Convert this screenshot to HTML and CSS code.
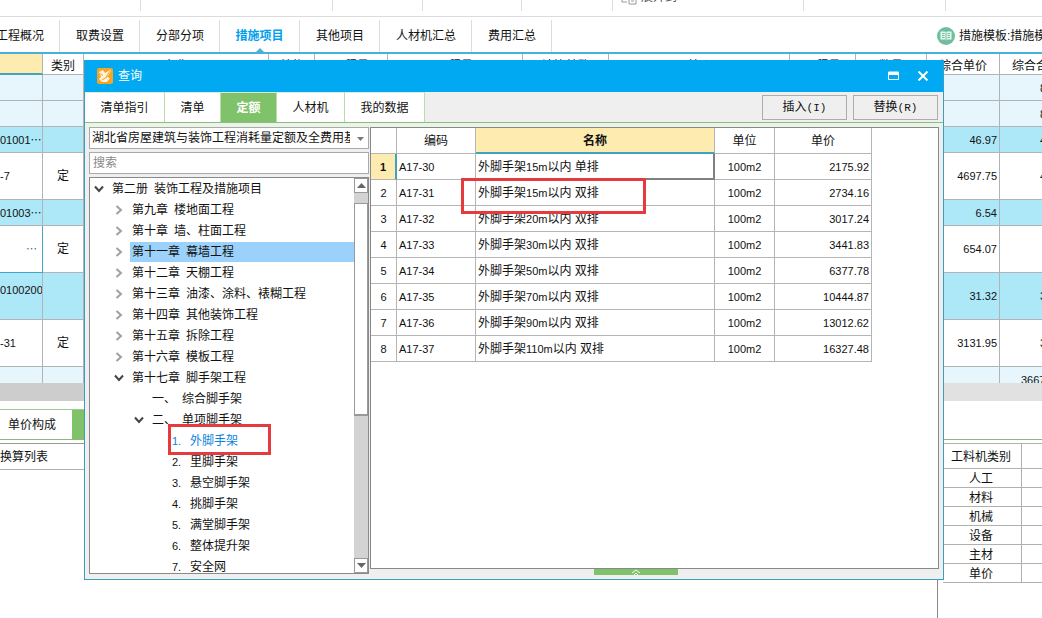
FILE: index.html
```
<!DOCTYPE html>
<html lang="zh-CN">
<head>
<meta charset="utf-8">
<title>查询</title>
<link rel="stylesheet" href="styles.css">
</head>
<body>
<svg class="sprite" aria-hidden="true">
  <symbol id="right" viewBox="0 0 10 10"><path d="M2.5 1 L7 5 L2.5 9" fill="none" stroke="#a0a0a0" stroke-width="2"/></symbol>
  <symbol id="down" viewBox="0 0 10 10"><path d="M1 2.5 L5 7 L9 2.5" fill="none" stroke="#444" stroke-width="2"/></symbol>
</svg>
<div class="app">
  <div class="ribbon">
    <div class="group g1"></div><div class="group g2"></div><div class="group g3"></div><div class="group g4"></div><div class="group g5"></div>
    <div class="group g6">
      <svg width="16" height="16" viewBox="0 0 16 16"><path d="M1 8v5h5M8 5h7v10H8zM10 9h3M10 12h3" fill="none" stroke="#999"/></svg>
      <span>展开到</span>
    </div>
    <div class="group g7"></div>
  </div>
  <div class="tabbar">
    <nav class="tabs">
      <button class="tab first">工程概况</button>
      <button class="tab">取费设置</button>
      <button class="tab">分部分项</button>
      <button class="tab active">措施项目</button>
      <button class="tab">其他项目</button>
      <button class="tab">人材机汇总</button>
      <button class="tab">费用汇总</button>
    </nav>
    <div class="template">
      <svg width="20" height="20" viewBox="0 0 20 20"><circle cx="10" cy="10" r="9" fill="#6fbf9f"/><path d="M4.500 5.500h4.500l1 1 1-1h4.500v8h-4.500l-1 1-1-1h-4.500z" fill="#e9f7f1"/><path d="M10 6.500v7.500M6 7.500h2.500M6 9.500h2.500M6 11.500h2.500M11.500 7.500h2.500M11.500 9.500h2.500M11.500 11.500h2.500" stroke="#6fbf9f"/></svg>
      <span>措施模板:措施模板</span>
    </div>
  </div>
  <div class="sheet">
    <table class="grid">
      <colgroup><col class="c43"><col class="c41"><col class="c185"><col class="c46"><col class="c73"><col class="c135"><col class="c86"><col class="c181"><col class="c66"><col class="c71"><col class="c73"><col class="c73"></colgroup>
      <tr class="head"><th class="current"></th><th>类别</th><th>名称</th><th>单位</th><th>工程量</th><th>工程量</th><th>计算基数</th><th>单价</th><th>工程量</th><th>数量</th><th>综合单价</th><th>综合合价</th></tr>
      <tr class="pale"><td></td><td></td><td colspan="8"></td><td></td><td class="cut">8</td></tr>
      <tr class="pale"><td></td><td></td><td colspan="8"></td><td></td><td class="cut">8</td></tr>
      <tr class="blue"><td class="code">01001⋯</td><td></td><td colspan="8"></td><td class="num">46.97</td><td class="cut">4</td></tr>
      <tr class="tall"><td>-7</td><td class="mid">定</td><td colspan="8"></td><td class="num">4697.75</td><td class="cut">4</td></tr>
      <tr class="blue"><td class="code">01003⋯</td><td></td><td colspan="8"></td><td class="num">6.54</td><td></td></tr>
      <tr class="tall"><td class="code picked">⋯</td><td class="mid">定</td><td colspan="8"></td><td class="num">654.07</td><td></td></tr>
      <tr class="blue tall"><td class="code upper">0100200</td><td></td><td colspan="8"></td><td class="num">31.32</td><td class="cut">3</td></tr>
      <tr class="tall"><td>-31</td><td class="mid">定</td><td colspan="8"></td><td class="num">3131.95</td><td class="cut">3</td></tr>
      <tr class="pale"><td></td><td></td><td colspan="8"></td><td></td><td class="total">3667</td></tr>
    </table>
  </div>
  <div class="hscroll"></div>
  <div class="bottom">
    <section class="detail">
      <div class="subtabs"><button class="subtab">单价构成</button><button class="subtab on" aria-label="换算"></button></div>
      <div class="listhead">换算列表</div>
    </section>
    <section class="kinds">
      <div class="subline"></div>
      <table class="kindtable">
        <colgroup><col class="c78"><col></colgroup>
        <tr><th>工料机类别</th><th></th></tr>
        <tr><td>人工</td><td></td></tr>
        <tr><td>材料</td><td></td></tr>
        <tr><td>机械</td><td></td></tr>
        <tr><td>设备</td><td></td></tr>
        <tr><td>主材</td><td></td></tr>
        <tr><td>单价</td><td></td></tr>
      </table>
    </section>
  </div>
</div>

<div class="dialog" role="dialog" aria-label="查询">
  <header class="titlebar">
    <svg width="16" height="16" viewBox="0 0 16 16"><rect width="16" height="16" rx="2" fill="#f5a623"/><path d="M2 4l4-2 2 3 5-3 1 1-4 6 3 1-3 4H5l-3-3 2-2z" fill="#fff3dc"/><path d="M3 5.500l3 2M9 9l4-6M5 12l5-3" stroke="#f2a01e" fill="none"/></svg>
    <span class="title">查询</span>
    <button class="winbtn" aria-label="最大化"><svg width="12" height="10" viewBox="0 0 12 10"><path d="M.5 1v7.500h10V1z" fill="none" stroke="#fff"/><path d="M0 1h11v3H0z" fill="#fff"/></svg></button>
    <button class="winbtn" aria-label="关闭"><svg width="12" height="10" viewBox="0 0 12 10"><path d="M1.500 .5l9 9M10.500 .5l-9 9" stroke="#fff" stroke-width="2"/></svg></button>
  </header>
  <div class="toolbar">
    <button class="dtab w79">清单指引</button><button class="dtab w57">清单</button><button class="dtab w56 on">定额</button><button class="dtab w67">人材机</button><button class="dtab w81">我的数据</button>
    <span class="fill"></span>
    <button class="act">插入<span class="key">(I)</span></button>
    <button class="act">替换<span class="key">(R)</span></button>
  </div>
  <div class="content">
    <div class="side">
      <div class="combo">
        <select aria-label="定额库"><option>湖北省房屋建筑与装饰工程消耗量定额及全费用基价表</option></select>
        <svg width="7" height="4" viewBox="0 0 7 4"><path d="M0 0h7L3.500 4z" fill="#777"/></svg>
      </div>
      <input class="search" type="text" placeholder="搜索" aria-label="搜索">
      <div class="treebox">
        <ul class="tree">
          <li class="l0"><svg><use href="#down"/></svg><span class="lab"><span>第二册</span><span>装饰工程及措施项目</span></span></li>
          <li class="l1"><svg><use href="#right"/></svg><span class="lab"><span>第九章</span><span>楼地面工程</span></span></li>
          <li class="l1"><svg><use href="#right"/></svg><span class="lab"><span>第十章</span><span>墙、柱面工程</span></span></li>
          <li class="l1"><svg><use href="#right"/></svg><span class="lab sel"><span>第十一章</span><span>幕墙工程</span></span></li>
          <li class="l1"><svg><use href="#right"/></svg><span class="lab"><span>第十二章</span><span>天棚工程</span></span></li>
          <li class="l1"><svg><use href="#right"/></svg><span class="lab"><span>第十三章</span><span>油漆、涂料、裱糊工程</span></span></li>
          <li class="l1"><svg><use href="#right"/></svg><span class="lab"><span>第十四章</span><span>其他装饰工程</span></span></li>
          <li class="l1"><svg><use href="#right"/></svg><span class="lab"><span>第十五章</span><span>拆除工程</span></span></li>
          <li class="l1"><svg><use href="#right"/></svg><span class="lab"><span>第十六章</span><span>模板工程</span></span></li>
          <li class="l1"><svg><use href="#down"/></svg><span class="lab"><span>第十七章</span><span>脚手架工程</span></span></li>
          <li class="l2"><svg></svg><span class="lab"><span>一、</span><span>综合脚手架</span></span></li>
          <li class="l2"><svg><use href="#down"/></svg><span class="lab"><span>二、</span><span>单项脚手架</span></span></li>
          <li class="l3 cur"><span class="lab"><span>1.</span><span>外脚手架</span></span><span class="mark"></span></li>
          <li class="l3"><span class="lab"><span>2.</span><span>里脚手架</span></span></li>
          <li class="l3"><span class="lab"><span>3.</span><span>悬空脚手架</span></span></li>
          <li class="l3"><span class="lab"><span>4.</span><span>挑脚手架</span></span></li>
          <li class="l3"><span class="lab"><span>5.</span><span>满堂脚手架</span></span></li>
          <li class="l3"><span class="lab"><span>6.</span><span>整体提升架</span></span></li>
          <li class="l3"><span class="lab"><span>7.</span><span>安全网</span></span></li>
        </ul>
        <div class="vscroll">
          <button class="arrow" aria-label="向上"><svg width="9" height="5" viewBox="0 0 9 5"><path d="M0 5h9L4.500 0z" fill="#666"/></svg></button>
          <div class="track"><div class="thumb"></div></div>
          <button class="arrow" aria-label="向下"><svg width="9" height="5" viewBox="0 0 9 5"><path d="M0 0h9L4.500 5z" fill="#666"/></svg></button>
        </div>
      </div>
    </div>
    <div class="results">
      <table class="quota">
        <colgroup><col class="q26"><col class="q79"><col class="q239"><col class="q60"><col class="q97"></colgroup>
        <tr><th></th><th>编码</th><th class="hot">名称</th><th>单位</th><th>单价</th></tr>
        <tr><td class="idx hot">1</td><td>A17-30</td><td class="name focus">外脚手架<i>15m</i>以内 单排</td><td class="unit">100m2</td><td class="price">2175.92</td></tr>
        <tr><td class="idx">2</td><td>A17-31</td><td class="name boxed">外脚手架<i>15m</i>以内 双排<span class="mark"></span></td><td class="unit">100m2</td><td class="price">2734.16</td></tr>
        <tr><td class="idx">3</td><td>A17-32</td><td class="name">外脚手架<i>20m</i>以内 双排</td><td class="unit">100m2</td><td class="price">3017.24</td></tr>
        <tr><td class="idx">4</td><td>A17-33</td><td class="name">外脚手架<i>30m</i>以内 双排</td><td class="unit">100m2</td><td class="price">3441.83</td></tr>
        <tr><td class="idx">5</td><td>A17-34</td><td class="name">外脚手架<i>50m</i>以内 双排</td><td class="unit">100m2</td><td class="price">6377.78</td></tr>
        <tr><td class="idx">6</td><td>A17-35</td><td class="name">外脚手架<i>70m</i>以内 双排</td><td class="unit">100m2</td><td class="price">10444.87</td></tr>
        <tr><td class="idx">7</td><td>A17-36</td><td class="name">外脚手架<i>90m</i>以内 双排</td><td class="unit">100m2</td><td class="price">13012.62</td></tr>
        <tr><td class="idx">8</td><td>A17-37</td><td class="name">外脚手架<i>110m</i>以内 双排</td><td class="unit">100m2</td><td class="price">16327.48</td></tr>
      </table>
    </div>
  </div>
  <button class="handle" aria-label="展开"><svg width="10" height="6" viewBox="0 0 10 6"><path d="M1 4l4-3 4 3M3 6l2-2 2 2" fill="none" stroke="#fff"/></svg></button>
</div>
</body>
</html>
```

FILE: styles.css
```
* { box-sizing: border-box; }
html, body { margin: 0; height: 100%; overflow: hidden; }
body, button, input, select {
  font-family: "Liberation Sans", "Noto Sans CJK SC", sans-serif;
  font-size: 12px;
  line-height: 16px;
  color: #111;
}
body { background: #fff; position: relative; }
button { padding: 0; border: 0; background: none; white-space: nowrap; }
svg { display: block; flex: none; }
i { font-style: normal; font-size: 11px; }
table { border-collapse: separate; border-spacing: 0; table-layout: fixed; }
th { font-weight: normal; }
.sprite { position: absolute; width: 0; height: 0; }
.app { display: flex; flex-direction: column; height: 100%; overflow: hidden; }

/* ribbon */
.ribbon { flex: none; display: flex; height: 17px; padding-bottom: 5px; border-bottom: 1px solid #dcdcdc; overflow: hidden; }
.group { flex: none; border-right: 1px solid #dcdcdc; }
.g1 { width: 141px; }
.g2 { width: 192px; }
.g3 { width: 90px; }
.g4 { width: 99px; }
.g5 { width: 91px; }
.g6 { width: 191px; display: flex; align-items: flex-end; gap: 4px; padding: 0 8px 6px; color: #555; height: 11px; }
.g7 { width: 142px; }

/* main tabs */
.tabbar { flex: none; display: flex; justify-content: space-between; height: 37px; padding-top: 3px; border-bottom: 2px solid #45b1dc; }
.tabs { display: flex; }
.tab { position: relative; padding: 0 15px 0 16px; border-right: 1px solid #dcdcdc; }
.tab.first { margin-left: -20px; }
.tab.active { padding: 0 15px; color: #009fee; font-weight: bold; min-width: 80px; }
.tab.active::after {
  content: ""; position: absolute; left: 50%; bottom: 0; margin-left: -4px;
  border: 4px solid transparent; border-top: 0; border-bottom-color: #45b1dc;
}
.template { display: flex; align-items: center; gap: 3px; width: 106px; overflow: hidden; white-space: nowrap; }

/* background sheet */
.sheet { flex: 1; min-height: 0; overflow: hidden; }
.grid { width: 1073px; }
.c43 { width: 43px; } .c41 { width: 41px; } .c185 { width: 185px; } .c46 { width: 46px; }
.c73 { width: 73px; } .c135 { width: 135px; } .c86 { width: 86px; } .c181 { width: 181px; }
.c66 { width: 66px; } .c71 { width: 71px; } .c78 { width: 79px; }
.grid td, .grid th { height: 26px; padding: 0; border-right: 1px solid #b0b4b6; border-bottom: 1px solid #b0b4b6; overflow: hidden; white-space: nowrap; }
.grid td { font-size: 11px; }
.grid th { height: 21px; padding-top: 3px; }
.grid th.current { background: #fdebb0; border-bottom: 2px solid #45a5b8; }
.grid .pale td { background: #e6f6fc; }
.grid .blue td { background: #ade8f9; }
.grid .tall td { height: 47px; }
.grid .mid { text-align: center; font-size: 12px; }
.grid .num { text-align: right; padding-right: 2px; }
.grid .code { text-align: right; padding-right: 5px; }
.grid .picked { color: #2c6ca0; border-color: #45a5c8; }
.grid .upper { vertical-align: top; padding: 9px 2px 0 0; }
.grid .cut { padding-left: 40px; }
.grid .total { padding-left: 21px; }
.hscroll { flex: none; height: 18px; background: linear-gradient(90deg, #cdcdcd 50%, #e1e1e1 50%); }

/* bottom panes */
.bottom { flex: none; display: flex; height: 217px; }
.detail { flex: 1; border-right: 1px solid #888; padding-top: 8px; }
.subtabs { display: flex; height: 31px; border-top: 1px solid #9ccb8c; border-bottom: 1px solid #8fb878; }
.subtab { width: 72px; padding: 0 8px; text-align: left; }
.subtab.on { background: #7fc269; }
.listhead { margin-top: 3px; height: 27px; line-height: 26px; border-top: 1px solid #999; border-bottom: 1px solid #b0b0b0; }
.kinds { width: 104px; padding: 8px 0 0 5px; overflow: hidden; }
.subline { height: 31px; border-bottom: 1px solid #8fb878; margin-bottom: 3px; }
.kindtable { width: 150px; border-top: 1px solid #b0b0b0; }
.kindtable td, .kindtable th { height: 19px; padding: 1px 2px 0 0; text-align: center; border-right: 1px solid #b0b0b0; border-bottom: 1px solid #b0b0b0; }
.kindtable th { height: 25px; }

/* dialog window */
.dialog {
  position: absolute; left: 84px; right: 98px; top: 60px; bottom: 38px;
  display: flex; flex-direction: column; background: #efefef; border: 1px solid #3c9dbd; border-top: 0;
}
.titlebar { flex: none; display: flex; align-items: center; height: 32px; padding: 0 8px 0 12px; background: #00a9f1; color: #fff; gap: 5px; }
.title { flex: 1; }
.winbtn { width: 24px; height: 24px; display: grid; place-items: center; }
.toolbar { flex: none; display: flex; align-items: center; height: 31px; padding-right: 5px; border-bottom: 1px solid #8fb98a; }
.dtab { align-self: stretch; background: #fff; border-right: 1px solid #b9dcab; border-top: 1px solid #dceed5; }
.dtab.on { background: #7fc269; color: #fff; font-weight: bold; }
.w79 { width: 80px; } .w57 { width: 56px; } .w56 { width: 56px; } .w67 { width: 68px; } .w81 { width: 80px; }
.fill { flex: 1; }
.act { width: 85px; height: 25px; margin-left: 6px; border: 1px solid #adadad; }
.key { font-family: "Liberation Mono", monospace; font-size: 11px; }
.content { flex: 1; min-height: 0; display: flex; gap: 1px; padding: 4px 4px 0; background: linear-gradient(#eaf5e6 4px, #efefef 4px); }
.side { flex: none; width: 280px; display: flex; flex-direction: column; gap: 3px; margin-bottom: -5px; }
.combo { position: relative; height: 22px; flex: none; }
.combo select { appearance: none; width: 100%; height: 100%; padding: 0 18px 0 2px; border: 1px solid #aaa; border-radius: 0; background: #fff; }
.combo svg { position: absolute; right: 5px; top: 10px; }
.search { flex: none; height: 22px; width: 100%; padding: 0 3px; border: 1px solid #aaa; }
.search::placeholder { color: #888; }
.treebox { flex: 1; min-height: 0; display: flex; border: 1px solid #8a8a8a; background: #fff; }
.tree { flex: 1; margin: 0; padding: 0; list-style: none; overflow: hidden; }
.tree li { position: relative; display: flex; align-items: center; height: 21px; }
.tree svg { width: 10px; height: 10px; margin-right: 6px; }
.l0 { padding-left: 4px; } .l1 { padding-left: 24px; } .l2 { padding-left: 44px; } .l3 { padding-left: 80px; }
.lab { flex: 1; display: flex; gap: 6px; padding-left: 2px; line-height: 20px; white-space: nowrap; }
.lab.sel { background: #9bd1fa; }
.l3 .lab span:first-child { width: 12px; font-size: 11px; }
.cur { color: #0a84e0; }
.mark { position: absolute; border: 3px solid #e53a3e; pointer-events: none; }
.cur .mark { left: 78px; top: -6px; width: 103px; height: 31px; }
.vscroll { width: 14px; display: flex; flex-direction: column; background: #d3d3d3; }
.arrow { flex: none; height: 15px; display: grid; place-items: center; background: #fff; border: 1px solid #999; }
.track { flex: 1; padding-top: 10px; }
.thumb { height: 60%; min-height: 20px; border: 1px solid #999; border-bottom-width: 2px; background: #fff; }

/* result table */
.results { flex: 1; min-width: 0; background: #fff; border: 1px solid #888; overflow: hidden; }
.quota { width: 501px; }
.q26 { width: 26px; } .q79 { width: 79px; } .q239 { width: 239px; } .q60 { width: 60px; } .q97 { width: 97px; }
.quota td, .quota th { height: 26px; padding: 1px 2px 0; border-right: 1px solid #b5b5b5; border-bottom: 1px solid #b5b5b5; white-space: nowrap; }
.quota td { font-size: 11px; }
.quota .name { font-size: 12px; }
.quota .idx, .quota .unit { text-align: center; }
.quota .price { text-align: right; }
.quota th.hot { background: #fdebb0; font-weight: bold; border-bottom: 2px solid #3fa3c0; }
.quota td.hot { background: #fdebb0; font-weight: bold; border-right: 2px solid #3fa3c0; }
.quota .focus { border-right: 2px solid #808080; border-bottom: 2px solid #808080; }
.boxed { position: relative; }
.boxed .mark { left: -15px; top: -2px; width: 185px; height: 36px; z-index: 1; }
.handle { flex: none; align-self: center; width: 84px; height: 6px; margin: 0 0 4px 244px; background: #7fc269; display: grid; place-items: center; position: relative; }
```
